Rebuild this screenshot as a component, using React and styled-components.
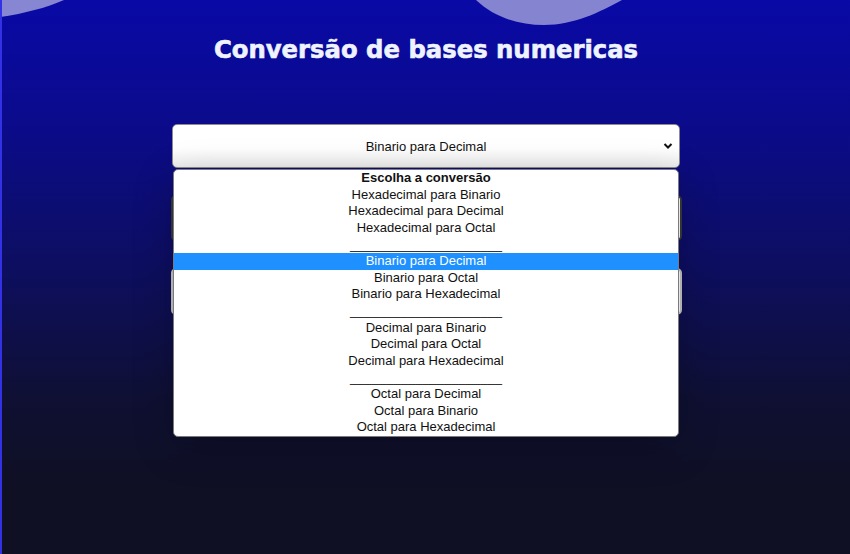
import React from 'react';
import styled, { createGlobalStyle } from 'styled-components';

const GlobalStyle = createGlobalStyle`
  html, body {
    margin: 0;
    padding: 0;
    height: 100%;
    overflow: hidden;
  }
  body {
    font-family: "Liberation Sans", Arial, sans-serif;
    background: #0f1024;
  }
`;

const Page = styled.div`
  position: relative;
  height: 100vh;
  box-sizing: border-box;
  border-left: 2px solid #3232e4;
  background: linear-gradient(180deg, #0909a6 0%, #0b0b8c 22%, #0d0e60 48%, #0f1033 72%, #0f1024 88%, #0f1024 100%);
  overflow: hidden;
`;

const Blobs = styled.svg`
  position: absolute;
  top: 0;
  left: -2px;
  width: 850px;
  height: 40px;
  pointer-events: none;
`;

const Main = styled.main`
  position: relative;
  display: flex;
  flex-direction: column;
  align-items: center;
  padding-top: 36px;
`;

const Title = styled.h1`
  margin: 0;
  font-family: "DejaVu Sans", sans-serif;
  font-weight: 700;
  font-size: 24.3px;
  line-height: 28px;
  color: #eef3ff;
  -webkit-text-stroke: 0.6px #eef3ff;
`;

const Form = styled.form`
  margin-top: 60px;
  width: 511px;
  display: flex;
  flex-direction: column;
  align-items: center;
  gap: 27px;
`;

const SelectWrap = styled.div`
  position: relative;
  width: 508px;
`;

const SelectBox = styled.div`
  height: 44px;
  box-sizing: border-box;
  border: 1px solid #8c8c8c;
  border-radius: 5px;
  background: linear-gradient(180deg, #ffffff 0%, #ffffff 55%, #ededed 100%);
  display: flex;
  align-items: center;
  justify-content: center;
  position: relative;
  font-size: 13px;
  color: #111;
`;

const Chevron = styled.svg`
  position: absolute;
  right: 6px;
  top: 50%;
  margin-top: -4px;
  width: 10px;
  height: 8px;
`;

const Field = styled.div`
  width: 511px;
  height: ${p => p.$h}px;
  box-sizing: border-box;
  border: 2px solid ${p => p.$edge};
  border-radius: 5px;
  background: #fff;
`;

const Popup = styled.ul`
  position: absolute;
  top: calc(100% + 1px);
  left: 1px;
  right: 1px;
  margin: 0;
  padding: 0;
  list-style: none;
  background: #fff;
  border: 1px solid #7a7a7a;
  border-radius: 5px;
  box-shadow: 0 10px 40px rgba(0, 0, 0, 0.22);
  overflow: hidden;
  z-index: 10;
`;

const Option = styled.li`
  height: 16.625px;
  line-height: 16.625px;
  text-align: center;
  font-size: 13px;
  white-space: nowrap;
  color: ${p => (p.$active ? '#fff' : '#111')};
  background: ${p => (p.$active ? '#1e90ff' : 'transparent')};
  font-weight: ${p => (p.$bold ? 700 : 400)};
`;

const SEP = '_____________________';

const options = [
  { label: 'Escolha a conversão', bold: true },
  { label: 'Hexadecimal para Binario' },
  { label: 'Hexadecimal para Decimal' },
  { label: 'Hexadecimal para Octal' },
  { label: SEP },
  { label: 'Binario para Decimal', active: true },
  { label: 'Binario para Octal' },
  { label: 'Binario para Hexadecimal' },
  { label: SEP },
  { label: 'Decimal para Binario' },
  { label: 'Decimal para Octal' },
  { label: 'Decimal para Hexadecimal' },
  { label: SEP },
  { label: 'Octal para Decimal' },
  { label: 'Octal para Binario' },
  { label: 'Octal para Hexadecimal' },
];

export default function App() {
  return (
    <>
      <GlobalStyle />
      <Page>
        <Blobs viewBox="0 0 850 40">
          <path d="M0,0 L64,0 C46,8 22,14 0,17 Z" fill="#8686d2" />
          <path d="M476,0 C494,17 518,25 544,25 C574,25 600,12 622,0 Z" fill="#8584d0" />
        </Blobs>
        <Main>
          <Title>Conversão de bases numericas</Title>
          <Form>
            <SelectWrap>
              <SelectBox>
                Binario para Decimal
                <Chevron viewBox="0 0 10 8">
                  <path d="M1.5,2 L5,5.5 L8.5,2" fill="none" stroke="#111" strokeWidth="2" />
                </Chevron>
              </SelectBox>
              <Popup>
                {options.map((o, i) => (
                  <Option key={i} $active={o.active} $bold={o.bold}>{o.label}</Option>
                ))}
              </Popup>
            </SelectWrap>
            <Field $h={46} $edge="#3a3a3a" />
            <Field $h={47} $edge="#c4c4c4" />
          </Form>
        </Main>
      </Page>
    </>
  );
}
